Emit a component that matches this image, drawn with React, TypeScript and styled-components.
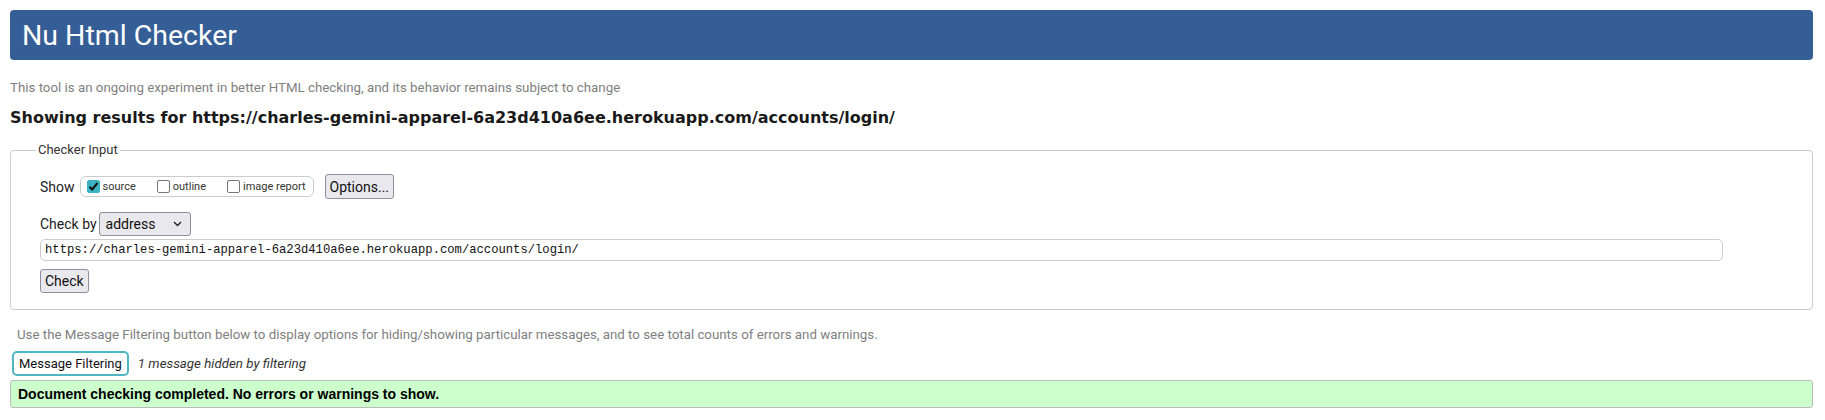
import React from 'react';
import styled, { createGlobalStyle } from 'styled-components';

const GlobalStyle = createGlobalStyle`
  html, body {
    margin: 0;
    padding: 0;
    background: #fff;
  }
  body {
    font-family: Roboto, "Liberation Sans", sans-serif;
    color: #222;
  }
  * {
    box-sizing: border-box;
  }
`;

const Page = styled.div`
  padding: 10px 12px 0 10px;
`;

const Banner = styled.h1`
  margin: 0;
  height: 50px;
  display: flex;
  align-items: center;
  padding: 0 12px;
  background: #365e96;
  border-radius: 4px;
  color: #fff;
  font-weight: 400;
  font-size: 28.5px;
`;

const Intro = styled.p`
  margin: 20px 0 0;
  font-size: 13.3px;
  line-height: 16px;
  color: #808080;
`;

const ResultsFor = styled.h2`
  margin: 12px 0 0;
  font-family: "DejaVu Sans", sans-serif;
  font-size: 16px;
  line-height: 20px;
  font-weight: 700;
  color: #1a1a1a;
`;

const InputSet = styled.fieldset`
  margin: 14px 0 0;
  min-width: 0;
  padding: 16px 0 16px 29px;
  border: 1px solid #ccc;
  border-radius: 4px;
`;

const Legend = styled.legend`
  margin-left: -4px;
  padding: 0 2px;
  font-size: 13px;
  line-height: 16px;
  color: #333;
`;

const Row = styled.div<{ $height: number; $gap: number }>`
  display: flex;
  align-items: center;
  height: ${({ $height }) => $height}px;
  margin-bottom: ${({ $gap }) => $gap}px;
`;

const FieldLabel = styled.span`
  font-size: 14px;
  color: #222;
  margin-right: 2px;
`;

const ShowGroup = styled.div`
  display: flex;
  align-items: center;
  height: 21px;
  padding: 0 7px 0 6px;
  margin-left: 3px;
  margin-right: 11px;
  border: 1px solid #ccc;
  border-radius: 6px;
`;

const Option = styled.label`
  display: flex;
  align-items: center;
  gap: 3px;
  font-size: 11px;
  color: #333;

  & + & {
    margin-left: 21px;
  }
`;

const Box = styled.span<{ $checked?: boolean }>`
  display: inline-flex;
  align-items: center;
  justify-content: center;
  width: 13px;
  height: 13px;
  border-radius: 2px;
  border: 1px solid ${({ $checked }) => ($checked ? '#3cb3c3' : '#767676')};
  background: ${({ $checked }) => ($checked ? '#3cb3c3' : '#fff')};
`;

const GreyButton = styled.button`
  padding: 0 4px;
  font-family: Roboto, "Liberation Sans", sans-serif;
  font-size: 14px;
  color: #111;
  background: #e9e9ed;
  border: 1px solid #8f8f9d;
  border-radius: 3px;
`;

const OptionsButton = styled(GreyButton)`
  height: 25px;
`;

const CheckButton = styled(GreyButton)`
  height: 24px;
`;

const Select = styled.div`
  display: flex;
  align-items: center;
  justify-content: space-between;
  width: 92px;
  height: 24px;
  padding: 0 8px 0 6px;
  font-size: 14px;
  color: #111;
  background: #e9e9ed;
  border: 1px solid #8f8f9d;
  border-radius: 3px;
`;

const UrlInput = styled.input`
  display: block;
  width: 95%;
  height: 22px;
  margin: 0 0 8px;
  padding: 0 4px;
  font-family: "Liberation Mono", "DejaVu Sans Mono", monospace;
  font-size: 12.2px;
  color: #111;
  border: 1px solid #ccc;
  border-radius: 5px;
  outline: none;
`;

const Hint = styled.p`
  margin: 17px 0 0 7px;
  font-size: 13.3px;
  line-height: 16px;
  color: #808080;
`;

const FilterRow = styled.div`
  display: flex;
  align-items: center;
  gap: 9px;
  margin: 8px 0 0 2px;
`;

const FilterButton = styled.button`
  height: 25px;
  padding: 0 5px;
  font-family: Roboto, "Liberation Sans", sans-serif;
  font-size: 13px;
  color: #111;
  background: #fff;
  border: 2px solid #4fb4c4;
  border-radius: 5px;
`;

const HiddenNote = styled.em`
  font-size: 13.3px;
  color: #333;
`;

const Success = styled.div`
  margin-top: 4px;
  height: 28px;
  display: flex;
  align-items: center;
  padding-left: 7px;
  background: #ccffcc;
  border: 1px solid #bbb;
  border-radius: 3px;
  font-family: "Liberation Sans", Arial, sans-serif;
  font-weight: 700;
  font-size: 14px;
  color: #000;
`;

const CheckMark = () => (
  <svg width="11" height="11" viewBox="0 0 11 11">
    <path d="M1.5 5.8 L4.2 8.5 L9.5 2" fill="none" stroke="#111" strokeWidth="2" />
  </svg>
);

const Chevron = () => (
  <svg width="9" height="6" viewBox="0 0 9 6">
    <path d="M1 1 L4.5 4.5 L8 1" fill="none" stroke="#222" strokeWidth="1.4" />
  </svg>
);

const showOptions = [
  { label: 'source', checked: true },
  { label: 'outline', checked: false },
  { label: 'image report', checked: false },
];

const url = 'https://charles-gemini-apparel-6a23d410a6ee.herokuapp.com/accounts/login/';

export default function App() {
  return (
    <Page>
      <GlobalStyle />
      <Banner>Nu Html Checker</Banner>
      <Intro>
        This tool is an ongoing experiment in better HTML checking, and its behavior remains
        subject to change
      </Intro>
      <ResultsFor>Showing results for {url}</ResultsFor>
      <InputSet>
        <Legend>Checker Input</Legend>
        <Row $height={25} $gap={13}>
          <FieldLabel>Show</FieldLabel>
          <ShowGroup>
            {showOptions.map((o) => (
              <Option key={o.label}>
                <Box $checked={o.checked}>{o.checked && <CheckMark />}</Box>
                {o.label}
              </Option>
            ))}
          </ShowGroup>
          <OptionsButton>Options...</OptionsButton>
        </Row>
        <Row $height={24} $gap={3}>
          <FieldLabel>Check by</FieldLabel>
          <Select>
            address
            <Chevron />
          </Select>
        </Row>
        <UrlInput defaultValue={url} />
        <CheckButton>Check</CheckButton>
      </InputSet>
      <Hint>
        Use the Message Filtering button below to display options for hiding/showing particular
        messages, and to see total counts of errors and warnings.
      </Hint>
      <FilterRow>
        <FilterButton>Message Filtering</FilterButton>
        <HiddenNote>1 message hidden by filtering</HiddenNote>
      </FilterRow>
      <Success>Document checking completed. No errors or warnings to show.</Success>
    </Page>
  );
}
